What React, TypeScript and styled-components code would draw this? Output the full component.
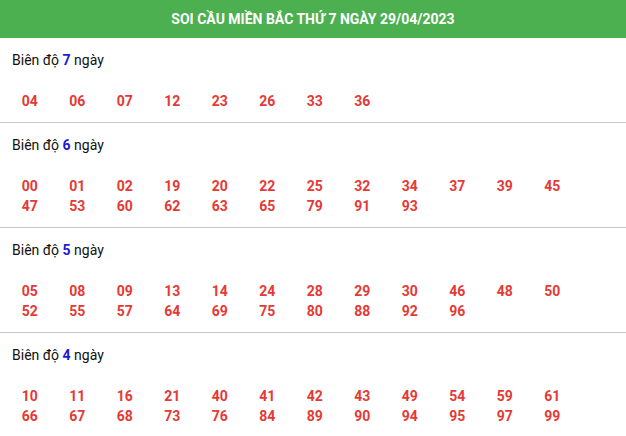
import styled, { createGlobalStyle } from 'styled-components';

const GlobalStyle = createGlobalStyle`
  body {
    margin: 0;
    background: #fff;
    font-family: Roboto, "Noto Sans", Arial, sans-serif;
  }
`;

const Wrapper = styled.div`
  width: 626px;
  background: #fff;
`;

const Title = styled.div`
  height: 38px;
  background-color: #4caf50;
  color: #fff;
  display: flex;
  align-items: center;
  justify-content: center;
  font-size: 14px;
  font-weight: 700;
`;

const Section = styled.section`
  padding: 12px 0 10px 0;
  border-bottom: 1px solid #c8c8c8;
`;

const Label = styled.div`
  padding-left: 12px;
  font-size: 14px;
  line-height: 20px;
  color: #111;
`;

const Days = styled.b`
  color: #1b1bd6;
`;

const NumberGrid = styled.div`
  display: grid;
  grid-template-columns: repeat(12, 47.5px);
  margin: 21px 0 0 6px;
`;

const Num = styled.span`
  text-align: center;
  font-size: 14px;
  font-weight: 700;
  line-height: 20.5px;
  color: #e53935;
`;

type Group = { days: number; numbers: string[] };

const groups: Group[] = [
  { days: 7, numbers: ['04', '06', '07', '12', '23', '26', '33', '36'] },
  {
    days: 6,
    numbers: ['00', '01', '02', '19', '20', '22', '25', '32', '34', '37', '39', '45', '47', '53', '60', '62', '63', '65', '79', '91', '93'],
  },
  {
    days: 5,
    numbers: ['05', '08', '09', '13', '14', '24', '28', '29', '30', '46', '48', '50', '52', '55', '57', '64', '69', '75', '80', '88', '92', '96'],
  },
  {
    days: 4,
    numbers: ['10', '11', '16', '21', '40', '41', '42', '43', '49', '54', '59', '61', '66', '67', '68', '73', '76', '84', '89', '90', '94', '95', '97', '99'],
  },
];

const App = () => (
  <Wrapper>
    <GlobalStyle />
    <Title>SOI CẦU MIỀN BẮC THỨ 7 NGÀY 29/04/2023</Title>
    {groups.map((g) => (
      <Section key={g.days}>
        <Label>
          Biên độ <Days>{g.days}</Days> ngày
        </Label>
        <NumberGrid>
          {g.numbers.map((n) => (
            <Num key={n}>{n}</Num>
          ))}
        </NumberGrid>
      </Section>
    ))}
  </Wrapper>
);

export default App;
